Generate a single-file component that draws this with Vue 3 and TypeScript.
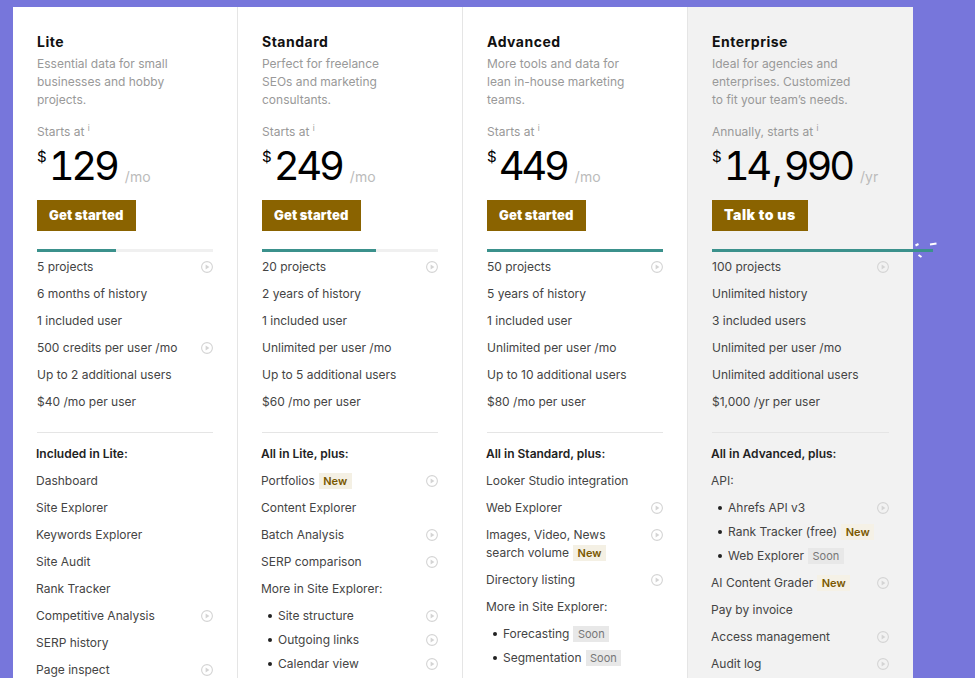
<script setup lang="ts">
interface Row { t: string; icon?: boolean; badge?: 'New' | 'Soon'; sub?: boolean; wrap?: boolean }
interface Plan {
  name: string; desc: string[]; starts: string; price: string; per: string; cta: string; fill: number;
  usage: Row[]; head: string; features: Row[]; alt?: boolean; spark?: boolean;
}
const plans: Plan[] = [
  {
    name: 'Lite', desc: ['Essential data for small', 'businesses and hobby', 'projects.'], starts: 'Starts at', price: '129', per: '/mo', cta: 'Get started', fill: 79,
    usage: [{ t: '5 projects', icon: true }, { t: '6 months of history' }, { t: '1 included user' }, { t: '500 credits per user /mo', icon: true }, { t: 'Up to 2 additional users' }, { t: '$40 /mo per user' }],
    head: 'Included in Lite:',
    features: [{ t: 'Dashboard' }, { t: 'Site Explorer' }, { t: 'Keywords Explorer' }, { t: 'Site Audit' }, { t: 'Rank Tracker' }, { t: 'Competitive Analysis', icon: true }, { t: 'SERP history' }, { t: 'Page inspect', icon: true }],
  },
  {
    name: 'Standard', desc: ['Perfect for freelance', 'SEOs and marketing', 'consultants.'], starts: 'Starts at', price: '249', per: '/mo', cta: 'Get started', fill: 114,
    usage: [{ t: '20 projects', icon: true }, { t: '2 years of history' }, { t: '1 included user' }, { t: 'Unlimited per user /mo' }, { t: 'Up to 5 additional users' }, { t: '$60 /mo per user' }],
    head: 'All in Lite, plus:',
    features: [{ t: 'Portfolios', badge: 'New', icon: true }, { t: 'Content Explorer' }, { t: 'Batch Analysis', icon: true }, { t: 'SERP comparison', icon: true }, { t: 'More in Site Explorer:' }, { t: 'Site structure', sub: true, icon: true }, { t: 'Outgoing links', sub: true, icon: true }, { t: 'Calendar view', sub: true, icon: true }],
  },
  {
    name: 'Advanced', desc: ['More tools and data for', 'lean in-house marketing', 'teams.'], starts: 'Starts at', price: '449', per: '/mo', cta: 'Get started', fill: 176,
    usage: [{ t: '50 projects', icon: true }, { t: '5 years of history' }, { t: '1 included user' }, { t: 'Unlimited per user /mo' }, { t: 'Up to 10 additional users' }, { t: '$80 /mo per user' }],
    head: 'All in Standard, plus:',
    features: [{ t: 'Looker Studio integration' }, { t: 'Web Explorer', icon: true }, { t: 'Images, Video, News search volume', badge: 'New', icon: true, wrap: true }, { t: 'Directory listing', icon: true }, { t: 'More in Site Explorer:' }, { t: 'Forecasting', sub: true, badge: 'Soon' }, { t: 'Segmentation', sub: true, badge: 'Soon' }],
  },
  {
    name: 'Enterprise', desc: ['Ideal for agencies and', 'enterprises. Customized', 'to fit your team’s needs.'], starts: 'Annually, starts at', price: '14,990', per: '/yr', cta: 'Talk to us', fill: 221, alt: true, spark: true,
    usage: [{ t: '100 projects', icon: true }, { t: 'Unlimited history' }, { t: '3 included users' }, { t: 'Unlimited per user /mo' }, { t: 'Unlimited additional users' }, { t: '$1,000 /yr per user' }],
    head: 'All in Advanced, plus:',
    features: [{ t: 'API:' }, { t: 'Ahrefs API v3', sub: true, icon: true }, { t: 'Rank Tracker (free)', sub: true, badge: 'New' }, { t: 'Web Explorer', sub: true, badge: 'Soon' }, { t: 'AI Content Grader', badge: 'New', icon: true }, { t: 'Pay by invoice' }, { t: 'Access management', icon: true }, { t: 'Audit log', icon: true }],
  },
];
</script>

<template>
  <div class="page">
    <div class="card">
      <section v-for="p in plans" :key="p.name" class="plan" :class="{ alt: p.alt }">
        <h2 class="name">{{ p.name }}</h2>
        <p class="desc"><span v-for="d in p.desc" :key="d">{{ d }}</span></p>
        <div class="starts">{{ p.starts }} <sup>i</sup></div>
        <div class="price">
          <span class="cur">$</span>
          <span class="num"><template v-for="(part, i) in p.price.split(',')" :key="i"><span v-if="i" class="comma">,</span>{{ part }}</template></span>
          <span class="per">{{ p.per }}</span>
        </div>
        <button class="cta">{{ p.cta }}</button>
        <div class="track">
          <div class="fill" :style="{ width: p.fill + 'px' }"></div>
          <svg v-if="p.spark" class="spark" width="24" height="18" viewBox="0 0 24 18">
            <path d="M1.5 4.5 L4.5 3 M16 3.6 L22.5 2.6 M4.5 14 L7.5 16" stroke="#fff" stroke-width="2" fill="none" />
          </svg>
        </div>
        <ul class="rows">
          <li v-for="r in p.usage" :key="r.t" class="row">
            <span class="label">{{ r.t }}</span>
            <svg v-if="r.icon" class="play" width="12" height="12" viewBox="0 0 12 12">
              <circle cx="6" cy="6" r="5.4" fill="none" stroke="#d4d4d4" stroke-width="1.1" />
              <path d="M4.6 3.6 L8.4 6 L4.6 8.4 Z" fill="#d4d4d4" />
            </svg>
          </li>
        </ul>
        <hr class="rule" />
        <div class="head">{{ p.head }}</div>
        <ul class="rows features">
          <li v-for="r in p.features" :key="r.t" class="row" :class="{ sub: r.sub, wrap: r.wrap }">
            <span class="label">{{ r.t }}<span v-if="r.badge" class="badge" :class="r.badge.toLowerCase()">{{ r.badge }}</span></span>
            <svg v-if="r.icon" class="play" width="12" height="12" viewBox="0 0 12 12">
              <circle cx="6" cy="6" r="5.4" fill="none" stroke="#d4d4d4" stroke-width="1.1" />
              <path d="M4.6 3.6 L8.4 6 L4.6 8.4 Z" fill="#d4d4d4" />
            </svg>
          </li>
        </ul>
      </section>
    </div>
  </div>
</template>

<style>
html, body { margin: 0; height: 678px; overflow: hidden; background: #7776db; }
</style>

<style scoped>
.page {
  height: 678px;
  overflow: hidden;
  padding: 7px 0 0 13px;
  box-sizing: border-box;
  background: #7776db;
  font-family: Inter, "Liberation Sans", sans-serif;
  color: #333;
}
.card { display: flex; width: 900px; background: #fff; min-height: 800px; }
.plan {
  width: 225px;
  box-sizing: border-box;
  padding: 26px 24px 0 24px;
  border-right: 1px solid #e5e5e5;
}
.plan.alt { background: #f2f2f2; border-right: 0; }
.name {
  margin: 0;
  font: 700 14px/18px Inter, sans-serif;
  letter-spacing: 0.5px;
  color: #111;
}
.desc { margin: 4px 0 0; font-size: 12px; line-height: 18px; color: #999; }
.desc span { display: block; white-space: nowrap; }
.starts { margin-top: 14px; font-size: 12px; line-height: 18px; color: #999; }
.starts sup { font-size: 8px; line-height: 0; vertical-align: 5px; }
.price { display: flex; align-items: flex-start; height: 48px; margin-top: 1px; color: #000; }
.cur { font-size: 15px; line-height: 16px; margin-top: 7px; margin-right: 2px; }
.num {
  font-size: 40px;
  line-height: 48px;
  letter-spacing: -3.2px;
  font-feature-settings: "tnum";
}
.comma { letter-spacing: 1px; margin-left: 3px; }
.per { font-size: 14px; margin-left: 8px; margin-top: 27px; line-height: 16px; color: #bbb; }
.cta {
  display: block;
  width: auto;
  height: 31px;
  margin-top: 10px;
  padding: 0 12px 2px;
  border: 0;
  background: #8a6300;
  color: #fff;
  font: 900 13px/18px Inter, sans-serif;
  letter-spacing: 0.1px;
}
.alt .cta { font-size: 14px; letter-spacing: 0.5px; }
.track { position: relative; height: 3px; margin-top: 18px; background: #f0f0f0; }
.alt .track { background: #e8e8e8; }
.fill { height: 3px; background: #3b918c; position: relative; }
.spark { position: absolute; left: 202px; top: -8px; }
.rows { list-style: none; margin: 0; padding: 0; }
.track + .rows { margin-top: 1px; }
.features { margin-left: -1px; }
.row {
  display: flex;
  align-items: center;
  justify-content: space-between;
  min-height: 27px;
  font-size: 12px;
  line-height: 18px;
  color: #444;
  white-space: nowrap;
}
.row.wrap { white-space: normal; min-height: 0; padding: 5px 0 4px; align-items: flex-start; }
.row.wrap .label { width: 150px; }
.row.wrap .play { margin-top: 3px; }
.row.sub { min-height: 24px; padding-left: 17px; position: relative; }
.row:not(.sub) + .row.sub { margin-top: 1.5px; }
.row.sub + .row:not(.sub) { margin-top: 1.5px; }
.row.sub::before {
  content: "";
  position: absolute;
  left: 7px;
  top: 10px;
  width: 4px;
  height: 4px;
  border-radius: 50%;
  background: #222;
}
.play { flex: none; }
.rule { border: 0; border-top: 1px solid #e5e5e5; margin: 17px 0 12px; }
.head { font-size: 12px; font-weight: 600; line-height: 18px; color: #222; margin: 0 0 4px -1px; }
.badge {
  display: inline-block;
  margin-left: 4px;
  padding: 0 4.5px;
  font-size: 11px;
  line-height: 16px;
}
.badge.new { background: #f4f0e4; color: #7a5800; font-weight: 600; }
.badge.soon { background: #e8e8e8; color: #777; font-weight: 400; }
.alt .badge.new { background: #f5f1e6; }
</style>
